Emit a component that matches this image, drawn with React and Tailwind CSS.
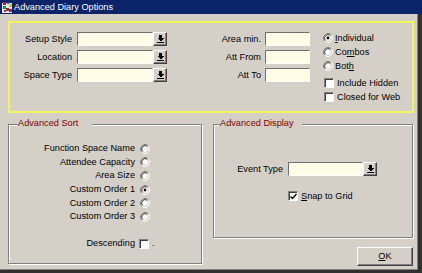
import React from 'react';

const font = "font-['Liberation_Sans',Arial,sans-serif]";

function TitleIcon() {
  return (
    <svg width="11" height="11" viewBox="0 0 11 11" shapeRendering="crispEdges">
      <rect x="0" y="1" width="10" height="10" fill="#e8e8e8" />
      <rect x="1" y="0" width="3" height="3" fill="#c01818" />
      <rect x="5" y="0" width="2" height="2" fill="#2850c8" />
      <rect x="7" y="2" width="3" height="3" fill="#e0c020" />
      <rect x="1" y="4" width="3" height="3" fill="#2f8f2f" />
      <rect x="4" y="6" width="3" height="3" fill="#c01818" />
      <rect x="7" y="7" width="3" height="3" fill="#2850c8" />
      <rect x="2" y="8" width="2" height="2" fill="#9030a0" />
    </svg>
  );
}

function DropIcon() {
  return (
    <svg width="7" height="8" viewBox="0 0 7 8" shapeRendering="crispEdges">
      <rect x="2" y="0" width="3" height="3" fill="#000" />
      <path d="M0 3h7L3.5 6.5z" fill="#000" />
      <rect x="0" y="7" width="7" height="1" fill="#000" />
    </svg>
  );
}

function Field({ className }) {
  return (
    <div
      className={
        'h-[14px] bg-[#fffde6] border border-t-[#6f6f6f] border-l-[#6f6f6f] border-b-white border-r-white ' +
        className
      }
    />
  );
}

function Combo({ className }) {
  return (
    <div className="flex">
      <Field className={className} />
      <div className="w-[14px] h-[14px] flex items-center justify-center bg-[#d4d0c8] border border-t-white border-l-white border-b-[#404040] border-r-[#404040] shadow-[inset_-1px_-1px_0_#808080]">
        <DropIcon />
      </div>
    </div>
  );
}

function Radio({ on }) {
  return (
    <svg width="10" height="10" viewBox="0 0 10 10" className="shrink-0">
      <circle cx="5" cy="5" r="3.6" fill="#fff" />
      <path d="M8.18 1.82A4.5 4.5 0 0 0 1.82 8.18" fill="none" stroke="#808080" strokeWidth="1" />
      <path d="M7.47 2.53A3.5 3.5 0 0 0 2.53 7.47" fill="none" stroke="#404040" strokeWidth="1" />
      <path d="M8.18 1.82A4.5 4.5 0 0 1 1.82 8.18" fill="none" stroke="#fff" strokeWidth="1" />
      <path d="M7.47 2.53A3.5 3.5 0 0 1 2.53 7.47" fill="none" stroke="#d4d0c8" strokeWidth="1" />
      {on && <circle cx="5" cy="5" r="1.4" fill="#000" />}
    </svg>
  );
}

function Check({ on }) {
  return (
    <div className="w-[10px] h-[10px] shrink-0 bg-white border border-t-[#808080] border-l-[#808080] border-b-white border-r-white shadow-[inset_1px_1px_0_#404040] flex items-center justify-center">
      {on && (
        <svg width="7" height="7" viewBox="0 0 7 7">
          <path d="M0.5 3.5l2 2L6.5 1" fill="none" stroke="#000" strokeWidth="1.4" />
        </svg>
      )}
    </div>
  );
}

function Group({ title, titleClass, className, children }) {
  return (
    <div
      className={
        'border border-[#808080] shadow-[inset_1px_1px_0_#fff,1px_1px_0_#fff] flex flex-col ' + className
      }
    >
      <span className={'block w-fit -mt-[7px] h-[11px] leading-[11px] bg-[#d4d0c8] text-[#800000] ' + titleClass}>
        {title}
      </span>
      {children}
    </div>
  );
}

const sortItems = [
  ['Function Space Name', false],
  ['Attendee Capacity', false],
  ['Area Size', false],
  ['Custom Order 1', true],
  ['Custom Order 2', false],
  ['Custom Order 3', false],
];

export default function App() {
  return (
    <div className={`w-[422px] h-[273px] bg-[#303030] ${font} text-[9.2px] leading-[11px] text-black overflow-hidden`}>
      <div className="w-[418px] h-[270px] bg-[#d4d0c8] border-r border-b border-[#808080] flex flex-col">
        {/* Title bar */}
        <div className="h-[14px] w-[422px] bg-[#0a246a] flex items-center pl-[2px] gap-[1px] text-white">
          <TitleIcon />
          <span className="text-[9.2px]">Advanced Diary Options</span>
        </div>

        <div className="pl-[8px] pt-[7px] flex flex-col">
          {/* Yellow filter box */}
          <div className="w-[406px] h-[92px] border-2 border-[#f5f35a] flex">
            <div className="flex flex-col gap-[4px] pt-[9px]">
              {['Setup Style', 'Location', 'Space Type'].map((l) => (
                <div key={l} className="flex items-center h-[14px]">
                  <span className="w-[62px] text-right">{l}</span>
                  <div className="ml-[5px]">
                    <Combo className="w-[76px]" />
                  </div>
                </div>
              ))}
            </div>
            <div className="flex flex-col gap-[4px] pt-[9px]">
              {['Area min.', 'Att From', 'Att To'].map((l) => (
                <div key={l} className="flex items-center h-[14px]">
                  <span className="w-[94px] text-right">{l}</span>
                  <Field className="ml-[4px] w-[45px]" />
                </div>
              ))}
            </div>
            <div className="flex flex-col pt-[8px] ml-[13px]">
              <div className="flex items-center h-[14px] gap-[2px]">
                <Radio on />
                <span>
                  <u>I</u>ndividual
                </span>
              </div>
              <div className="flex items-center h-[14px] gap-[2px]">
                <Radio />
                <span>
                  Co<u>m</u>bos
                </span>
              </div>
              <div className="flex items-center h-[14px] gap-[2px]">
                <Radio />
                <span>
                  Bot<u>h</u>
                </span>
              </div>
              <div className="flex items-center h-[14px] gap-[3px] ml-[1px] mt-[3px]">
                <Check />
                <span>Include Hidden</span>
              </div>
              <div className="flex items-center h-[14px] gap-[3px] ml-[1px]">
                <Check />
                <span>Closed for Web</span>
              </div>
            </div>
          </div>

          <div className="flex mt-[11px] gap-[11px]">
            {/* Advanced Sort */}
            <Group title="Advanced Sort" titleClass="ml-[9px] pr-[14px]" className="w-[194px] h-[140px]">
              <div className="flex flex-col pt-[13px]">
                {sortItems.map(([l, on]) => (
                  <div key={l} className="flex items-center h-[13.6px]">
                    <span className="w-[126px] text-right">{l}</span>
                    <div className="ml-[5px]">
                      <Radio on={on} />
                    </div>
                  </div>
                ))}
                <div className="flex items-center h-[14px] mt-[13px]">
                  <span className="w-[126px] text-right">Descending</span>
                  <div className="ml-[4px]">
                    <Check />
                  </div>
                  <span className="ml-[3px]">.</span>
                </div>
              </div>
            </Group>

            <div className="flex flex-col">
              {/* Advanced Display */}
              <Group title="Advanced Display" titleClass="ml-[6px] pr-[8px]" className="w-[200px] h-[114px]">
                <div className="flex flex-col pt-[33px]">
                  <div className="flex items-center h-[14px]">
                    <span className="w-[69px] text-right">Event Type</span>
                    <div className="ml-[5px]">
                      <Combo className="w-[75px]" />
                    </div>
                  </div>
                  <div className="flex items-center h-[14px] mt-[13px] ml-[74px] gap-[3px]">
                    <Check on />
                    <span>
                      <u>S</u>nap to Grid
                    </span>
                  </div>
                </div>
              </Group>

              <button className="self-end mt-[9px] w-[56px] h-[19px] bg-[#d4d0c8] border border-t-white border-l-white border-b-[#404040] border-r-[#404040] shadow-[inset_-1px_-1px_0_#808080] flex items-center justify-center">
                <span>
                  <u>O</u>K
                </span>
              </button>
            </div>
          </div>
        </div>
      </div>
    </div>
  );
}
